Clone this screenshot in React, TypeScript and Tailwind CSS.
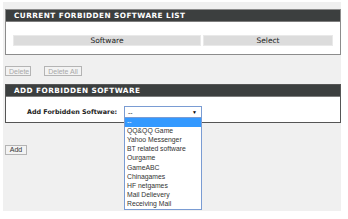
const items = [
    'QQ&QQ Game',
    'Yahoo Messenger',
    'BT related software',
    'Ourgame',
    'GameABC',
    'Chinagames',
    'HF netgames',
    'Mail Delievery',
    'Receiving Mail',
];

function SectionHeader({ title }: { title: string }) {
    return (
        <div className="h-[12px] bg-[#3c3f3f] border-b border-[#7d7d7d] pl-[8px] flex items-center text-white font-bold uppercase text-[7.3px] tracking-[0.45px] leading-none font-['DejaVu_Sans',sans-serif] whitespace-nowrap">
            {title}
        </div>
    );
}

function Btn({ label, disabled, className }: { label: string; disabled?: boolean; className?: string }) {
    return (
        <button
            className={
                'h-[10px] px-[3px] border border-[#b4b4b4] bg-[#f3f3f3] text-[7px] leading-none font-["Liberation_Sans",sans-serif] ' +
                (disabled ? 'text-[#a8a8a8] ' : 'text-[#333] ') +
                (className ?? '')
            }
        >
            {label}
        </button>
    );
}

export default function App() {
    return (
        <div className="w-[348px] h-[219px] bg-white overflow-hidden">
            <div className="ml-[3px] mt-[2px] w-[338px] h-[209px] bg-[#f0f0f0] pt-[7px] pl-[2px] relative">
                {/* current list */}
                <div className="w-[336px] h-[46px] bg-white border border-[#8c8c8c]">
                    <SectionHeader title="Current Forbidden Software List" />
                    <div className="pt-[13px] px-[7px]">
                        <div className="flex gap-[2px] h-[11px] text-[7.5px] text-[#222] font-['DejaVu_Sans',sans-serif] leading-none">
                            <div className="w-[188px] bg-[#dcdcdc] border border-[#e9e9e9] flex items-center justify-center">Software</div>
                            <div className="flex-1 bg-[#dcdcdc] border border-[#e9e9e9] flex items-center justify-center">Select</div>
                        </div>
                    </div>
                </div>

                <div className="flex mt-[11px] gap-[13px]">
                    <Btn label="Delete" disabled className="w-[26px]" />
                    <Btn label="Delete All" disabled className="w-[38px]" />
                </div>

                {/* add */}
                <div className="mt-[8px] w-[336px] h-[39px] bg-white border border-[#555]">
                    <SectionHeader title="Add Forbidden Software" />
                    <div className="flex items-center pt-[9px] pl-[21px]">
                        <span className="w-[97px] whitespace-nowrap font-bold text-[6.4px] text-[#222] font-['DejaVu_Sans',sans-serif] leading-none">
                            Add Forbidden Software:
                        </span>
                        <div className="w-[78px] h-[12px] border border-[#7a9cd3] bg-white flex items-center justify-between pl-[3px] pr-[4px] text-[7px] leading-none font-['Liberation_Sans',sans-serif] text-[#333]">
                            <span>--</span>
                            <span className="text-[5px] text-black">▼</span>
                        </div>
                    </div>
                </div>

                <div className="mt-[11px]">
                    <Btn label="Add" className="w-[22px]" />
                </div>

                {/* open dropdown list */}
                <div className="absolute left-[121px] top-[115px] w-[78px] bg-white border border-[#7a9cd3] font-['Liberation_Sans',sans-serif] text-[6.8px] leading-none text-[#333]">
                    <div className="h-[9px] bg-[#3399ff] text-white px-[2px] flex items-center">--</div>
                    {items.map((it) => (
                        <div key={it} className="h-[9.1px] px-[2px] flex items-center whitespace-nowrap">
                            {it}
                        </div>
                    ))}
                </div>
            </div>
        </div>
    );
}
